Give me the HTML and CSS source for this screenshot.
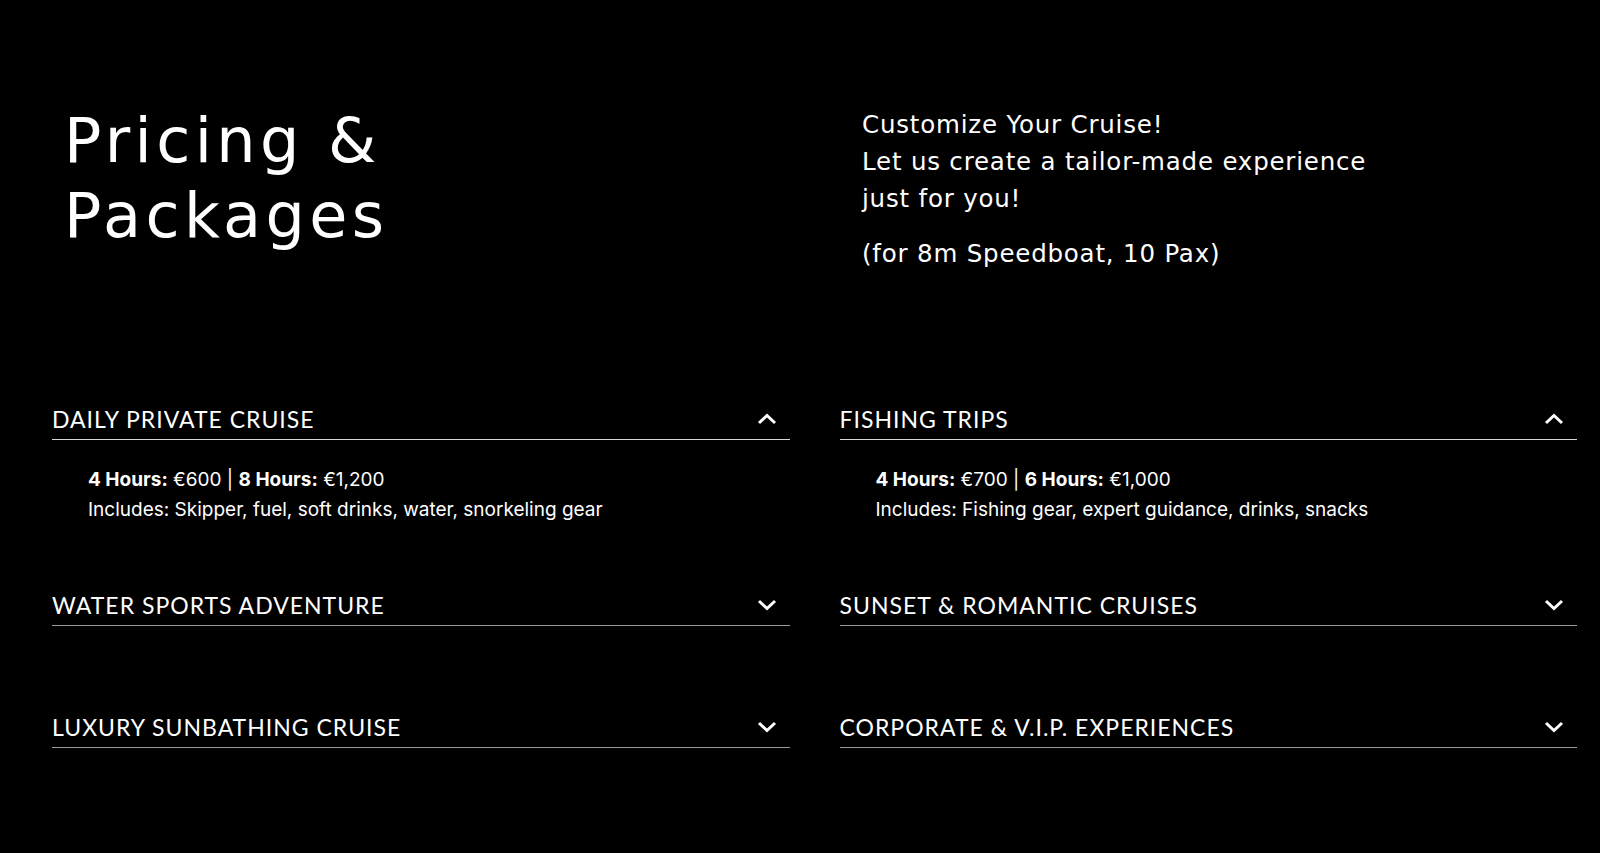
FILE: index.html
```html
<!DOCTYPE html>
<html>
<head>
    <title>Pricing &amp; Packages</title>
    <link rel="stylesheet" href="styles.css">
</head>
<body>
    <section class="intro">
        <h1>Pricing &amp;<br>Packages</h1>
        <div class="intro-text">
            <p>Customize Your Cruise!<br>Let us create a tailor-made experience<br>just for you!</p>
            <p>(for 8m Speedboat, 10 Pax)</p>
        </div>
    </section>

    <section class="packages">
        <div class="column">
            <div class="item open">
                <div class="item-head">
                    <span>Daily Private Cruise</span>
                    <svg class="chevron" width="20" height="12" viewBox="0 0 20 12"><polyline points="2,10 10,2.5 18,10"/></svg>
                </div>
                <div class="panel">
                    <p><b>4 Hours:</b> €600 | <b>8 Hours:</b> €1,200</p>
                    <p>Includes: Skipper, fuel, soft drinks, water, snorkeling gear</p>
                </div>
            </div>
            <div class="item">
                <div class="item-head">
                    <span>Water Sports Adventure</span>
                    <svg class="chevron" width="20" height="12" viewBox="0 0 20 12"><polyline points="2,2 10,9.5 18,2"/></svg>
                </div>
            </div>
            <div class="item">
                <div class="item-head">
                    <span>Luxury Sunbathing Cruise</span>
                    <svg class="chevron" width="20" height="12" viewBox="0 0 20 12"><polyline points="2,2 10,9.5 18,2"/></svg>
                </div>
            </div>
        </div>

        <div class="column">
            <div class="item open">
                <div class="item-head">
                    <span>Fishing Trips</span>
                    <svg class="chevron" width="20" height="12" viewBox="0 0 20 12"><polyline points="2,10 10,2.5 18,10"/></svg>
                </div>
                <div class="panel">
                    <p><b>4 Hours:</b> €700 | <b>6 Hours:</b> €1,000</p>
                    <p>Includes: Fishing gear, expert guidance, drinks, snacks</p>
                </div>
            </div>
            <div class="item">
                <div class="item-head">
                    <span>Sunset &amp; Romantic Cruises</span>
                    <svg class="chevron" width="20" height="12" viewBox="0 0 20 12"><polyline points="2,2 10,9.5 18,2"/></svg>
                </div>
            </div>
            <div class="item">
                <div class="item-head">
                    <span>Corporate &amp; V.I.P. Experiences</span>
                    <svg class="chevron" width="20" height="12" viewBox="0 0 20 12"><polyline points="2,2 10,9.5 18,2"/></svg>
                </div>
            </div>
        </div>
    </section>
</body>
</html>
```

FILE: styles.css
```css
body {
    margin: 0;
    background: #000;
    color: #fff;
    font-family: Lato, "Noto Sans", sans-serif;
}
.intro {
    display: grid;
    grid-template-columns: 798px 1fr;
    padding: 103px 0 0 64px;
    height: 304px;
    box-sizing: border-box;
    font-family: "DejaVu Sans", sans-serif;
}
.intro h1 {
    margin: 0;
    font-size: 62px;
    font-weight: 400;
    line-height: 75px;
    letter-spacing: 4.4px;
}
.intro-text {
    padding-top: 3px;
}
.intro-text p {
    margin: 0 0 18px;
    font-size: 24.5px;
    line-height: 37px;
    letter-spacing: 0.8px;
}
.packages {
    display: grid;
    grid-template-columns: 1fr 1fr;
    column-gap: 50px;
    padding: 100px 23px 0 52px;
}
.item {
    margin-bottom: 86px;
}
.item.open {
    margin-bottom: 65px;
}
.item-head {
    display: flex;
    justify-content: space-between;
    align-items: center;
    padding: 0 13px 5px 0;
    border-bottom: 1px solid #9a9a9a;
    font-size: 23px;
    line-height: 30px;
    text-transform: uppercase;
    letter-spacing: 1px;
}
.item.open .item-head {
    border-bottom-color: #d6d6d6;
}
.chevron {
    fill: none;
    stroke: #fff;
    stroke-width: 3;
}
.panel {
    padding: 25px 0 0 36px;
    font-family: Inter, "Liberation Sans", sans-serif;
    font-size: 19px;
    line-height: 30px;
}
.panel p {
    margin: 0;
}
.panel b {
    font-weight: 700;
}
```
